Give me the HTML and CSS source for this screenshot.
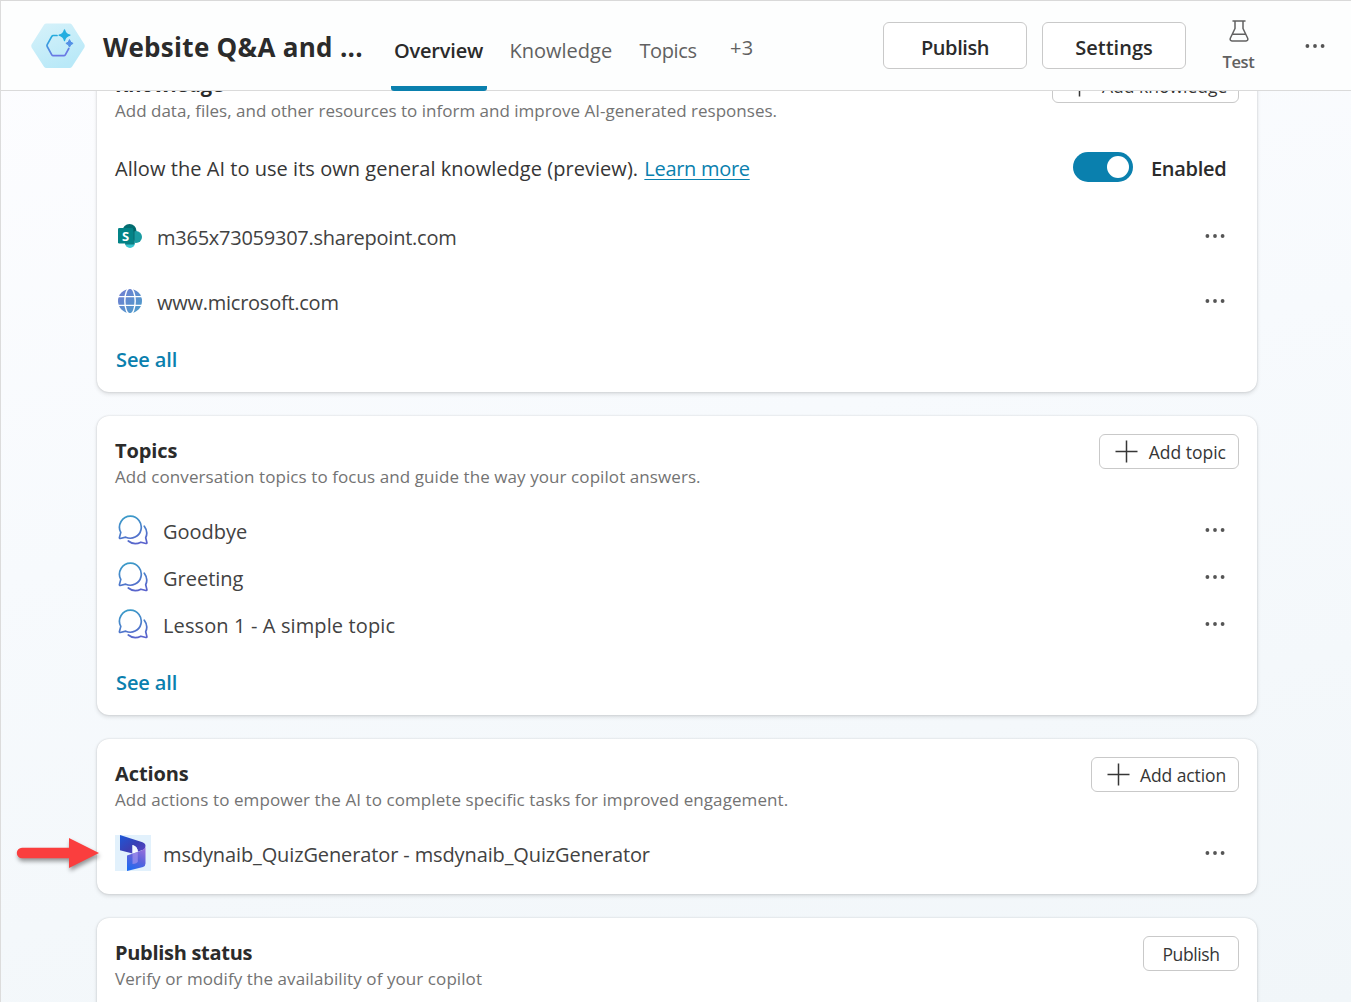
FILE: index.html
```html
<!DOCTYPE html>
<html lang="en">
<head>
<meta charset="utf-8">
<title>Website Q&amp;A</title>
<link rel="stylesheet" href="styles.css">
</head>
<body>
<svg class="defs" width="0" height="0" aria-hidden="true">
  <defs>
    <linearGradient id="chatStroke" gradientUnits="userSpaceOnUse" x1="10" y1="0" x2="18" y2="30"><stop offset="0" stop-color="#3a9cc8"/><stop offset="1" stop-color="#5a62cc"/></linearGradient>
    <symbol id="dots" viewBox="0 0 20 4"><circle cx="2.4" cy="2" r="1.9"/><circle cx="10" cy="2" r="1.9"/><circle cx="17.6" cy="2" r="1.9"/></symbol>
    <symbol id="plus" viewBox="0 0 23 23"><path d="M11.5 .5v22M.5 11.5h22" fill="none" stroke="currentColor" stroke-width="1.5"/></symbol>
    <symbol id="chat" viewBox="0 0 30 30"><g fill="none" stroke="url(#chatStroke)" stroke-width="1.7" stroke-linejoin="round" stroke-linecap="round"><path d="M12.6 1.200A11 11 0 0 0 2.800 17.400L1.400 22.600C1.300 23.200 1.700 23.600 2.300 23.500L7.700 22.200A11 11 0 1 0 12.600 1.200Z"/><path d="M26.3 11.2C29 14.8 29.5 18.8 27.7 22.7L28.9 27.6C29 28.2 28.5 28.6 27.9 28.5L22.9 27.2C18.6 29.3 13.7 28.7 10.3 26"/></g></symbol>
  </defs>
</svg>

<div class="page">
  <header class="topbar">
    <svg class="logo" viewBox="0 0 54 46">
      <defs>
        <linearGradient id="hex" x1="0" y1="0" x2=".5" y2="1"><stop offset="0" stop-color="#d7f2fa"/><stop offset="1" stop-color="#b9e9f8"/></linearGradient>
        <linearGradient id="ring" x1="0" y1="0" x2=".3" y2="1"><stop offset="0" stop-color="#1eb0dc"/><stop offset="1" stop-color="#6a78e4"/></linearGradient>
      </defs>
      <path d="M15.500 .5H38.500Q40.200 .5 41 1.800L53.300 21.300Q54.200 23 53.300 24.700L41 43.700Q40.200 45 38.500 45H15.500Q13.800 45 13 43.700L.7 24.700Q-.2 23 .7 21.300L13 1.800Q13.800 .5 15.500 .5Z" fill="url(#hex)"/>
      <path d="M26 12.500H22.300Q21.300 12.500 20.800 13.400L16.200 21.700Q15.700 22.600 16.200 23.500L20.800 31.800Q21.300 32.700 22.300 32.700H32.800Q33.800 32.700 34.300 31.800L37.800 25.500" fill="none" stroke="url(#ring)" stroke-width="1.700" stroke-linecap="round"/>
      <path d="M33.500 6.800Q34.500 11.200 38.900 12.200Q34.500 13.200 33.500 17.600Q32.500 13.200 28.100 12.200Q32.500 11.200 33.500 6.800Z" fill="#23aee0" stroke="#23aee0" stroke-width="1.300" stroke-linejoin="round"/>
      <path d="M38.500 16.600Q39.200 19.700 42.100 20.400Q39.200 21.100 38.500 24.100Q37.800 21.100 34.900 20.400Q37.800 19.700 38.500 16.600Z" fill="#5391e6" stroke="#5391e6" stroke-width="1" stroke-linejoin="round"/>
    </svg>
    <h1 class="title">Website Q&amp;A and ...</h1>
    <nav class="tabs">
      <a class="tab tab-active">Overview</a>
      <a class="tab tab-knowledge">Knowledge</a>
      <a class="tab tab-topics">Topics</a>
      <a class="tab tab-more">+3</a>
    </nav>
    <div class="actions">
      <button class="btn-large tight">Publish</button>
      <button class="btn-large">Settings</button>
      <div class="test">
        <svg width="20" height="22" viewBox="0 0 20 22" fill="none" stroke="#616161" stroke-width="1.500" stroke-linecap="round" stroke-linejoin="round"><path d="M4 .9H16M6 .9V8.500L1.300 18.300Q.6 20.800 3 20.900H17Q19.400 20.800 18.700 18.300L14 8.500V.9M3.500 14.200H16.500"/></svg>
        <span>Test</span>
      </div>
      <svg class="dots"><use href="#dots"/></svg>
    </div>
  </header>

  <main class="content">
    <section class="card card-knowledge">
      <div class="head">
        <div><h2>Knowledge</h2><p class="desc">Add data, files, and other resources to inform and improve AI-generated responses.</p></div>
        <button class="btn btn-knowledge"><svg class="plus"><use href="#plus"/></svg>Add knowledge</button>
      </div>
      <div class="allow">
        <p>Allow the AI to use its own general knowledge (preview). <a class="learn">Learn more</a></p>
        <span class="toggle"><span class="knob"></span></span>
        <span class="enabled">Enabled</span>
      </div>
      <ul class="sources">
        <li class="row">
          <svg width="24" height="24" viewBox="0 0 24 24"><circle cx="11.500" cy="7" r="7" fill="#036c70"/><circle cx="18" cy="13" r="6" fill="#1a9ba1"/><circle cx="12" cy="19" r="5" fill="#37c6d0"/><path d="M11 4h4.500q1 0 1 1v14.500q0 1-1 1H7Z" fill="#024f53" opacity=".65"/><rect y="4" width="15.500" height="15.500" rx="1.300" fill="#038387"/><text x="7.700" y="16.600" text-anchor="middle" class="sp-letter">S</text></svg>
          <span class="label host">m365x73059307.sharepoint.com</span><svg class="dots"><use href="#dots"/></svg>
        </li>
        <li class="row">
          <svg width="24" height="24" viewBox="0 0 24 24"><defs><linearGradient id="globe" x1="0" y1="0" x2="1" y2="1"><stop offset="0" stop-color="#737bd2"/><stop offset="1" stop-color="#4a9fca"/></linearGradient></defs><circle cx="12" cy="12" r="12" fill="url(#globe)"/><g fill="none" stroke="#fff" stroke-width="1.400"><ellipse cx="12" cy="12" rx="5.200" ry="13"/><path d="M0 7.600H24M0 16.400H24"/></g></svg>
          <span class="label host">www.microsoft.com</span><svg class="dots"><use href="#dots"/></svg>
        </li>
      </ul>
      <a class="see-all">See all</a>
    </section>

    <section class="card card-topics">
      <div class="head">
        <div><h2>Topics</h2><p class="desc wide">Add conversation topics to focus and guide the way your copilot answers.</p></div>
        <button class="btn"><svg class="plus"><use href="#plus"/></svg>Add topic</button>
      </div>
      <ul class="topics">
        <li class="row"><svg class="chat"><use href="#chat"/></svg><span class="label">Goodbye</span><svg class="dots"><use href="#dots"/></svg></li>
        <li class="row"><svg class="chat"><use href="#chat"/></svg><span class="label">Greeting</span><svg class="dots"><use href="#dots"/></svg></li>
        <li class="row"><svg class="chat"><use href="#chat"/></svg><span class="label lesson">Lesson 1 - A simple topic</span><svg class="dots"><use href="#dots"/></svg></li>
      </ul>
      <a class="see-all">See all</a>
    </section>

    <section class="card card-actions">
      <div class="head">
        <div><h2>Actions</h2><p class="desc wide">Add actions to empower the AI to complete specific tasks for improved engagement.</p></div>
        <button class="btn btn-action"><svg class="plus"><use href="#plus"/></svg>Add action</button>
      </div>
      <div class="row">
        <svg class="dataverse" width="36" height="36" viewBox="0 0 36 36">
          <defs>
            <linearGradient id="dvTop" x1="0" y1="0" x2="1" y2="1"><stop offset="0" stop-color="#1d58d8"/><stop offset=".55" stop-color="#3a3fb4"/><stop offset="1" stop-color="#5c45c8"/></linearGradient>
            <linearGradient id="dvLow" x1=".7" y1="0" x2=".3" y2="1"><stop offset="0" stop-color="#9a70dc"/><stop offset=".5" stop-color="#5d63dc"/><stop offset="1" stop-color="#1f6bf0"/></linearGradient>
          </defs>
          <rect width="36" height="36" fill="#e2f1fc"/>
          <path d="M5 0L27.500 7.200Q30.500 8.300 30.500 11L29.500 14.300L22.800 16.800Q22.800 11.600 17.500 10V18.500L5 15.200Z" fill="url(#dvTop)"/>
          <path d="M17.500 10Q22.800 11.600 22.800 16.800L17.500 18.800Z" fill="#f4f8fe"/>
          <path d="M30.500 11V28.500Q30.500 31 28 32L12 36V20.500L26 15.800Q30.500 14 30.500 11Z" fill="url(#dvLow)"/>
          <path d="M17.500 18.700L22.800 17V26.500Q22 28.500 17.500 29Z" fill="#a795ee" opacity=".65"/>
        </svg>
        <span class="label quiz">msdynaib_QuizGenerator - msdynaib_QuizGenerator</span><svg class="dots"><use href="#dots"/></svg>
      </div>
      <svg class="arrow" width="92" height="44" viewBox="0 0 92 44"><path d="M10 12.800H57V3L87 18L57 33V23.200H10A5.200 5.200 0 0 1 10 12.800Z" fill="#fa3e3e"/></svg>
    </section>

    <section class="card card-publish">
      <div class="head">
        <div><h2 class="narrow">Publish status</h2><p class="desc wide">Verify or modify the availability of your copilot</p></div>
        <button class="btn btn-publish">Publish</button>
      </div>
    </section>
  </main>
</div>
</body>
</html>
```
FILE: styles.css
```css
* { box-sizing: border-box; }
body { margin: 0; font-family: "Open Sans", "Noto Sans", sans-serif; font-size: 20px; color: #424242; overflow: hidden; }
h1, h2, p, ul { margin: 0; padding: 0; }
ul { list-style: none; }
svg { display: block; flex: none; }
button { font-family: inherit; background: #fff; border: 1px solid #c9c9c9; border-radius: 6px; padding: 0; white-space: nowrap; }
.defs { position: absolute; }

.page { width: 1351px; height: 1002px; display: flex; flex-direction: column; border-top: 1px solid #d9d9d9; border-left: 1px solid #dcdcdc; background: linear-gradient(168deg, #fdfdff 0%, #f7fafd 45%, #f1f6f9 100%); overflow: hidden; }

.topbar { height: 90px; flex: none; display: flex; align-items: center; background: #fdfefe; border-bottom: 1px solid #dadada; position: relative; z-index: 1; padding-left: 30px; }
.logo { width: 54px; height: 46px; }
.title { width: 262px; margin-left: 18px; margin-top: 2px; font-size: 26px; line-height: 36px; font-weight: 700; letter-spacing: .3px; color: #2b2b2b; white-space: nowrap; }
.tabs { display: flex; align-self: stretch; margin-left: 26px; }
.tab { height: 90px; line-height: 100px; padding-left: 4px; padding-right: 3px; color: #616161; white-space: nowrap; }
.tab-active { width: 96px; padding-left: 3px; font-weight: 600; letter-spacing: -.2px; color: #2b2b2b; border-bottom: 5px solid #0a80ae; border-radius: 3px; }
.tab-knowledge { width: 110px; margin-left: 18.5px; }
.tab-topics { width: 68px; margin-left: 20px; letter-spacing: -.4px; }
.tab-more { margin-left: 22.5px; line-height: 94px; font-weight: 500; letter-spacing: .4px; }
.actions { display: flex; align-items: center; margin-left: auto; padding-right: 26px; }
.btn-large { width: 144px; height: 47px; margin-right: 15px; font-size: 20px; font-weight: 600; color: #2b2b2b; padding-top: 3px; }
.tight { letter-spacing: -.4px; }
.test { width: 50px; margin-left: 12.5px; margin-right: 41.5px; padding-top: 3px; display: flex; flex-direction: column; align-items: center; gap: 8px; font-size: 16.500px; line-height: 24px; font-weight: 600; letter-spacing: -.4px; color: #616161; }
.dots { width: 20px; height: 4px; fill: #555; }

.content { width: 1160px; margin-left: 96px; margin-top: -41px; display: flex; flex-direction: column; gap: 24px; }
.card { flex: none; position: relative; background: #fff; border-radius: 12px; padding: 18px 18px 0; box-shadow: 0 0 2px rgba(0, 0, 0, .16), 0 2px 4px rgba(0, 0, 0, .12); }
.card-knowledge { height: 342px; }
.card-topics { height: 299px; }
.card-actions { height: 155px; }
.card-publish { height: 155px; }
.head { height: 56px; display: flex; justify-content: space-between; }
h2 { padding-top: 4px; font-size: 20px; line-height: 26px; font-weight: 700; letter-spacing: -.1px; color: #2b2b2b; }
.narrow { letter-spacing: -.3px; }
.desc { font-size: 17px; line-height: 26px; letter-spacing: .01px; color: #737373; }
.wide { letter-spacing: .08px; }
.btn { height: 35px; display: flex; align-items: center; padding: 0 12px 0 15px; gap: 11px; font-size: 17.500px; color: #363636; }
.btn-knowledge { width: 187px; }
.btn-action { width: 148px; gap: 10px; letter-spacing: -.1px; }
.btn-publish { width: 96px; justify-content: center; padding: 0; letter-spacing: -.4px; }
.plus { width: 23px; height: 23px; margin-top: -1px; }
.row { display: flex; align-items: center; }
.row .dots { margin-left: auto; margin-right: 14px; margin-top: -4px; }

.allow { height: 56px; margin-top: 16px; display: flex; align-items: center; padding-right: 12px; color: #363636; letter-spacing: .04px; }
.learn { margin-left: 1px; letter-spacing: -.3px; color: #0a80ae; text-decoration: underline; text-underline-offset: 3px; text-decoration-thickness: 1px; }
.toggle { width: 60px; height: 30px; margin-left: auto; margin-right: 18px; margin-top: -3px; border-radius: 15px; background: #0a80ae; display: flex; align-items: center; justify-content: flex-end; padding-right: 4px; }
.knob { width: 22px; height: 22px; border-radius: 50%; background: #fff; }
.enabled { width: 76px; font-weight: 600; letter-spacing: -.3px; color: #2b2b2b; }
.sources { margin-top: 9px; padding-left: 3px; }
.sources .row { height: 65px; gap: 15px; }
.sources .row > svg:first-child { margin-top: -3px; }
.host { letter-spacing: -.25px; }
.sp-letter { font-size: 13px; font-weight: 700; fill: #fff; }
.see-all { display: block; padding-left: 1px; font-size: 20px; line-height: 30px; font-weight: 600; letter-spacing: -.1px; color: #0a80ae; }
.card-knowledge .see-all { margin-top: 10px; }

.topics { margin-top: 18px; }
.topics .row { height: 47px; }
.chat { width: 30px; height: 30px; margin: -3px 15px 0 3px; }
.topics + .see-all { margin-top: 19px; }
.lesson { letter-spacing: .12px; }

.card-actions .row { height: 47px; margin-top: 18px; }
.dataverse { margin-right: 12px; margin-top: -4px; }
.quiz { letter-spacing: -.12px; }
.arrow { position: absolute; left: -85px; top: 96px; filter: drop-shadow(1px 3px 2px rgba(0, 0, 0, .4)); }
```
